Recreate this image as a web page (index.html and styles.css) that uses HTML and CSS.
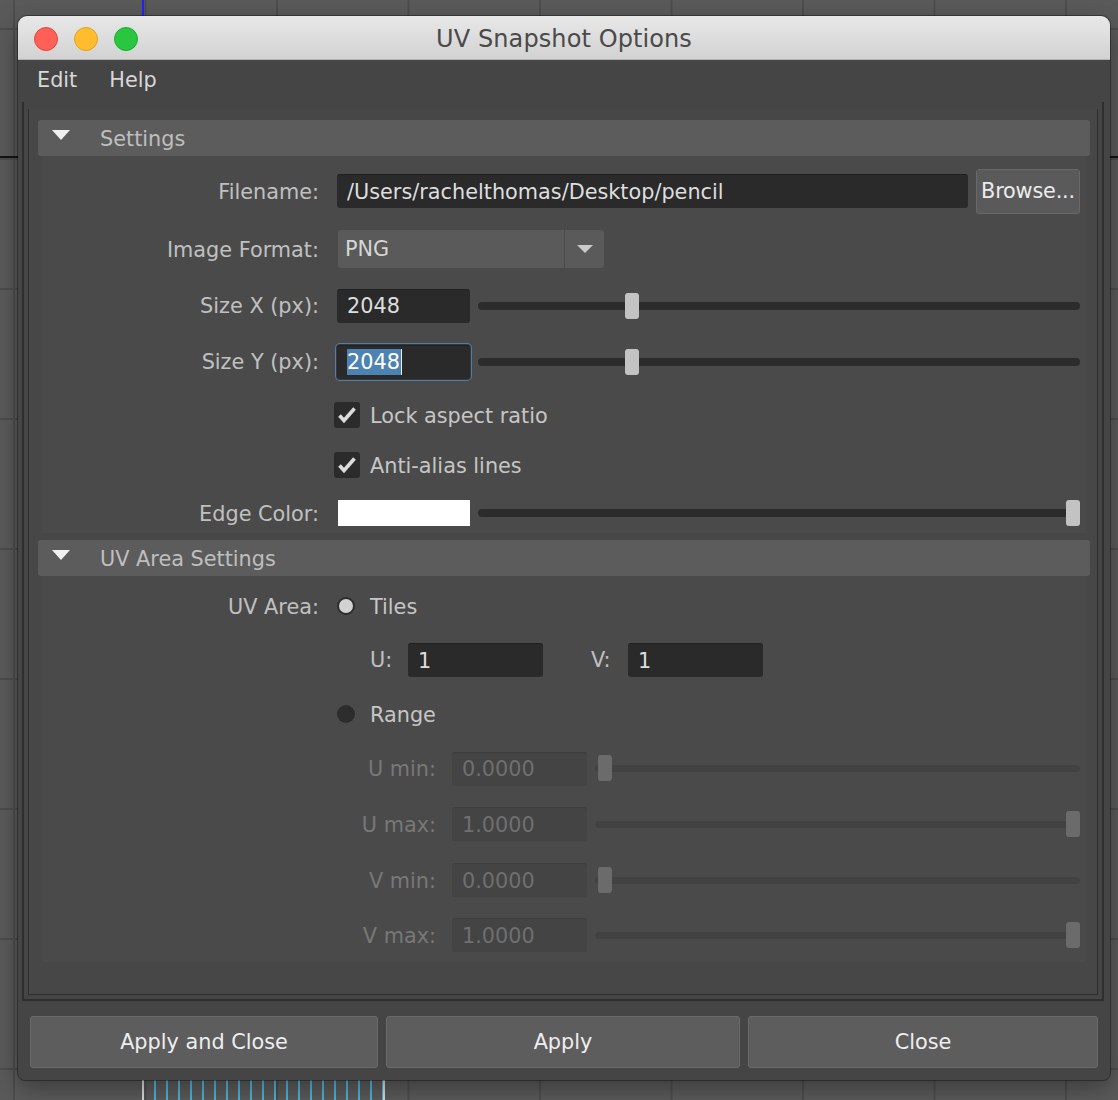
FILE: index.html
```html
<!DOCTYPE html>
<html lang="en">
<head>
<meta charset="utf-8">
<title>UV Snapshot Options</title>
<link rel="stylesheet" href="styles.css">
</head>
<body>
<div class="uv-tex"></div>
<div class="window">
  <header class="titlebar">
    <div class="lights">
      <span class="light l-close"></span>
      <span class="light l-min"></span>
      <span class="light l-max"></span>
    </div>
    <div class="title">UV Snapshot Options</div>
    <div></div>
  </header>
  <nav class="menubar"><span>Edit</span><span>Help</span></nav>

  <div class="frame-outer">
    <div class="frame-inner">

      <section class="section">
        <div class="sec-head"><span class="tri"></span><span class="sec-title">Settings</span></div>
        <div class="sec-body settings">
          <div class="row">
            <div class="lbl">Filename:</div>
            <div class="ctrl">
              <div class="field grow">/Users/rachelthomas/Desktop/pencil</div>
              <div class="btn browse">Browse...</div>
            </div>
          </div>
          <div class="row">
            <div class="lbl">Image Format:</div>
            <div class="ctrl">
              <div class="dropdown">
                <span class="dd-text">PNG</span>
                <span class="dd-arrow"><span class="dd-tri"></span></span>
              </div>
            </div>
          </div>
          <div class="row">
            <div class="lbl">Size X (px):</div>
            <div class="ctrl">
              <div class="field num">2048</div>
              <div class="slider" style="--v:0.25"><span class="thumb"></span></div>
            </div>
          </div>
          <div class="row">
            <div class="lbl">Size Y (px):</div>
            <div class="ctrl">
              <div class="field num focus"><span class="sel">2048</span><span class="caret"></span></div>
              <div class="slider" style="--v:0.25"><span class="thumb"></span></div>
            </div>
          </div>
          <div class="row">
            <div></div>
            <div class="ctrl check-row">
              <span class="checkbox"><svg viewBox="0 0 26 26" width="26" height="26"><path d="M5.5 13.5 L10 18.5 L20.5 6.5" fill="none" stroke="#dcdcdc" stroke-width="3.6"/></svg></span>
              <span class="opt">Lock aspect ratio</span>
            </div>
          </div>
          <div class="row">
            <div></div>
            <div class="ctrl check-row">
              <span class="checkbox"><svg viewBox="0 0 26 26" width="26" height="26"><path d="M5.5 13.5 L10 18.5 L20.5 6.5" fill="none" stroke="#dcdcdc" stroke-width="3.6"/></svg></span>
              <span class="opt">Anti-alias lines</span>
            </div>
          </div>
          <div class="row r-edge">
            <div class="lbl">Edge Color:</div>
            <div class="ctrl">
              <div class="swatch"></div>
              <div class="slider" style="--v:1"><span class="thumb"></span></div>
            </div>
          </div>
        </div>
      </section>

      <section class="section sec-uv">
        <div class="sec-head"><span class="tri"></span><span class="sec-title">UV Area Settings</span></div>
        <div class="sec-body uvarea">
          <div class="row">
            <div class="lbl">UV Area:</div>
            <div class="ctrl radio-row">
              <span class="radio on"></span>
              <span class="opt">Tiles</span>
            </div>
          </div>
          <div class="row">
            <div></div>
            <div class="ctrl uv-pair">
              <span class="uv-lbl">U:</span>
              <div class="field tile">1</div>
              <span class="uv-lbl v">V:</span>
              <div class="field tile">1</div>
            </div>
          </div>
          <div class="row">
            <div></div>
            <div class="ctrl radio-row">
              <span class="radio"></span>
              <span class="opt">Range</span>
            </div>
          </div>
          <div class="row range">
            <div class="lbl off">U min:</div>
            <div class="ctrl">
              <div class="field dis">0.0000</div>
              <div class="slider off" style="--v:0"><span class="thumb"></span></div>
            </div>
          </div>
          <div class="row range">
            <div class="lbl off">U max:</div>
            <div class="ctrl">
              <div class="field dis">1.0000</div>
              <div class="slider off" style="--v:1"><span class="thumb"></span></div>
            </div>
          </div>
          <div class="row range">
            <div class="lbl off">V min:</div>
            <div class="ctrl">
              <div class="field dis">0.0000</div>
              <div class="slider off" style="--v:0"><span class="thumb"></span></div>
            </div>
          </div>
          <div class="row range">
            <div class="lbl off">V max:</div>
            <div class="ctrl">
              <div class="field dis">1.0000</div>
              <div class="slider off" style="--v:1"><span class="thumb"></span></div>
            </div>
          </div>
        </div>
      </section>

    </div>
  </div>

  <div class="actions">
    <div class="abtn">Apply and Close</div>
    <div class="abtn">Apply</div>
    <div class="abtn">Close</div>
  </div>
</div>
</body>
</html>
```

FILE: styles.css
```css
* { box-sizing: border-box; }

html, body { margin: 0; padding: 0; }

body {
  width: 1118px;
  height: 1100px;
  overflow: hidden;
  position: relative;
  font-family: "DejaVu Sans", "Liberation Sans", sans-serif;
  font-size: 20.8px;
  background-color: #5a5a5a;
  background-image:
    linear-gradient(to bottom, transparent 156px, #141414 156px, #141414 158px, transparent 158px),
    linear-gradient(to right, transparent 142px, #2424f0 142px, #2424f0 144px, transparent 144px),
    linear-gradient(to right, #4d4d4d 0, #4d4d4d 2px, transparent 2px),
    linear-gradient(to bottom, #4d4d4d 0, #4d4d4d 2px, transparent 2px);
  background-size: 100% 100%, 100% 100%, 131.5px 100%, 100% 130px;
  background-position: 0 0, 0 0, 13px 0, 0 28px;
  background-repeat: no-repeat, no-repeat, repeat-x, repeat-y;
}

/* UV texture strip peeking out below the window */
.uv-tex {
  position: absolute;
  left: 142px;
  top: 1070px;
  width: 243px;
  height: 30px;
  border-left: 2px solid #d8d8d8;
  border-right: 2px solid #d8d8d8;
  background-image: repeating-linear-gradient(to right, transparent 0, transparent 10px, #4eb2d6 10px, #4eb2d6 12px);
}

.window {
  position: relative;
  z-index: 1;
  width: 1092px;
  margin: 16px 0 0 18px;
  background: #454545;
  border-radius: 9px 9px 7px 7px;
  overflow: hidden;
  box-shadow: 0 0 0 1px rgba(0,0,0,0.35), 0 8px 24px rgba(0,0,0,0.35);
  padding-bottom: 12px;
}

/* title bar */
.titlebar {
  height: 44px;
  display: grid;
  grid-template-columns: 1fr auto 1fr;
  align-items: center;
  padding-top: 2px;
  background: linear-gradient(to bottom, #e8e8e8, #d2d2d2);
  border-bottom: 1px solid #b3b3b3;
}
.lights {
  display: flex;
  gap: 16px;
  padding-left: 16px;
}
.light {
  width: 24px;
  height: 24px;
  border-radius: 50%;
}
.l-close { background: #fe5f57; border: 1px solid #e2463f; }
.l-min { background: #febc2e; border: 1px solid #e0a123; }
.l-max { background: #29c740; border: 1px solid #1dad2b; }
.title {
  font-size: 24px;
  color: #4a4a4a;
  letter-spacing: 0.1px;
}

/* menu bar */
.menubar {
  height: 42px;
  display: flex;
  align-items: center;
  gap: 32px;
  padding-left: 19px;
  padding-bottom: 2px;
  color: #d8d8d8;
}

/* frames */
.frame-outer {
  margin: 0 6px 0 4px;
  padding: 7px 4px 4px 4px;
  border: 2px solid #2e2e2e;
  border-top: none;
}
.frame-inner {
  border: 1px solid #2e2e2e;
  border-top: none;
  background: #474747;
  padding: 11px 7px 32px 9px;
}

/* sections */
.sec-uv { margin-top: 7px; }
.sec-head {
  height: 36px;
  background: #5c5c5c;
  border-radius: 3px;
  display: flex;
  align-items: center;
  padding-left: 14px;
}
.tri {
  width: 0;
  height: 0;
  border-left: 9px solid transparent;
  border-right: 9px solid transparent;
  border-top: 10px solid #f0f0f0;
  margin-top: -6px;
  margin-right: 30px;
}
.sec-title { color: #bfbfbf; padding-top: 1px; }

.sec-body {
  margin: 0 4px;
  background: #4a4a4a;
  display: grid;
  padding-right: 6px;
}
.settings {
  padding-top: 6px;
  grid-template-rows: 58px 58px 55px 57px 50px 50px 43px;
}
.uvarea {
  padding-top: 3px;
  grid-template-rows: 54px 54px 54px 55px 56px 56px 54px;
}

.row {
  display: grid;
  grid-template-columns: 277px 1fr;
  column-gap: 18px;
  align-items: center;
}
.row.range {
  grid-template-columns: 394px 1fr;
  column-gap: 16px;
}
.r-edge { padding-top: 3px; }

.lbl {
  text-align: right;
  color: #c0c0c0;
  white-space: nowrap;
  padding-top: 1px;
}
.lbl.off { color: #787878; }

.ctrl {
  display: flex;
  align-items: center;
  gap: 8px;
  min-width: 0;
}

/* text fields */
.field {
  height: 34px;
  background: #2a2a2a;
  border-top: 1px solid #202020;
  border-radius: 3px;
  color: #dedede;
  display: flex;
  align-items: center;
  padding-left: 10px;
  white-space: nowrap;
}
.field.grow { flex: 1; }
.field.num { width: 133px; flex: none; }
.field.tile { width: 135px; flex: none; }
.field.dis {
  width: 135px;
  flex: none;
  background: #444444;
  border-top-color: #3e3e3e;
  color: #6f6f6f;
}
.field.focus {
  box-shadow: 0 0 0 1px #2e3a45, 0 0 0 2px #5a7b9a;
}
.sel {
  background: #4d83b2;
  color: #ffffff;
  line-height: 26px;
  padding: 0 1px 0 0;
}
.caret {
  width: 1px;
  height: 26px;
  background: #f0f0f0;
}

.btn.browse {
  width: 104px;
  height: 45px;
  flex: none;
  background: #5a5a5a;
  border: 1px solid #686868;
  border-radius: 3px;
  color: #ececec;
  display: flex;
  align-items: center;
  justify-content: center;
  white-space: nowrap;
  letter-spacing: -0.2px;
}

/* dropdown */
.dropdown {
  width: 266px;
  height: 38px;
  margin-left: 1px;
  background: #5a5a5a;
  border-radius: 3px;
  display: flex;
  align-items: stretch;
}
.dd-text {
  flex: 1;
  display: flex;
  align-items: center;
  padding-left: 7px;
  color: #d6d6d6;
}
.dd-arrow {
  width: 40px;
  border-left: 1px solid #4b4b4b;
  display: flex;
  align-items: center;
  justify-content: center;
}
.dd-tri {
  width: 0;
  height: 0;
  border-left: 8.5px solid transparent;
  border-right: 8.5px solid transparent;
  border-top: 8px solid #cacaca;
}

/* sliders */
.slider {
  flex: 1;
  height: 8px;
  border-radius: 4px;
  background: #2c2c2c;
  position: relative;
}
.thumb {
  position: absolute;
  top: -9px;
  left: calc(var(--v) * (100% - 14px));
  width: 14px;
  height: 26px;
  border-radius: 3px;
  background: #c3c3c3;
}
.slider.off { background: #424242; height: 7px; }
.slider.off .thumb {
  top: -10px;
  left: calc(3px + var(--v) * (100% - 17px));
  background: #6b6b6b;
}

/* checkbox / radio */
.check-row { gap: 10px; }
.checkbox {
  width: 26px;
  height: 26px;
  margin-left: -3px;
  background: #2b2b2b;
  border-radius: 3px;
  display: block;
}
.checkbox svg { display: block; }
.opt { color: #c6c6c6; white-space: nowrap; padding-top: 1px; }

.radio-row { gap: 15px; }
.radio {
  width: 18px;
  height: 18px;
  border-radius: 50%;
  background: #2d2d2d;
  flex: none;
}
.radio.on {
  background: #d2d2d2;
  border: 2.5px solid #2d2d2d;
}

.swatch {
  width: 132px;
  height: 26px;
  margin-left: 1px;
  background: #ffffff;
  flex: none;
}

/* U / V tile fields */
.uv-pair { gap: 0; padding-left: 33px; }
.uv-lbl { width: 38px; color: #c0c0c0; }
.uv-lbl.v { width: 37px; margin-left: 48px; }

/* bottom buttons */
.actions {
  display: grid;
  grid-template-columns: 348px 354px 1fr;
  gap: 8px;
  margin: 15px 12px 0;
  height: 52px;
}
.abtn {
  background: #5d5d5d;
  border: 1px solid #6a6a6a;
  border-radius: 3px;
  color: #eeeeee;
  display: flex;
  align-items: center;
  justify-content: center;
}
```
